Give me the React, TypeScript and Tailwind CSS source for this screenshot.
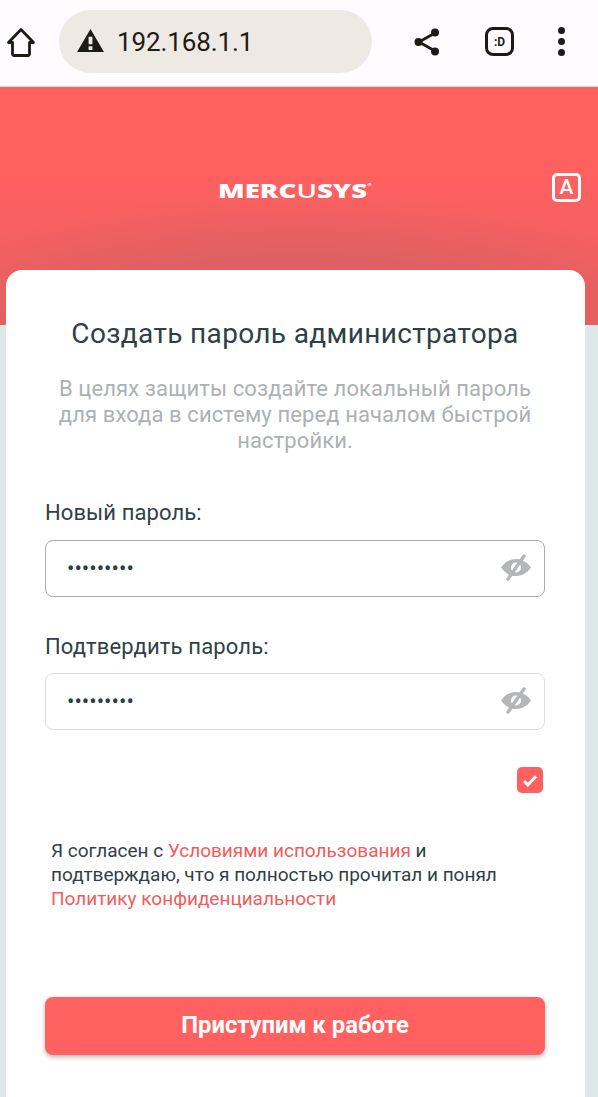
import { useState } from "react";

const EyeOff = () => (
  <svg className="mb-[3px]" width="32" height="28" viewBox="0 0 32 28" fill="none">
    <path
      d="M1 14.500C5 9 10 6 16 6s11 3 15 8.500c-4 5.500-9 8.500-15 8.500s-11-3-15-8.500Z"
      fill="#b4b6b7"
    />
    <circle cx="16" cy="14.500" r="5" fill="#fff" />
    <path d="M8 26 24 3" stroke="#b4b6b7" strokeWidth="3.400" strokeLinecap="round" />
  </svg>
);

const PasswordField = ({ active }: { active?: boolean }) => (
  <div
    className={`flex h-[57px] items-center justify-between rounded-lg border bg-white pl-[21px] pr-[12px] ${
      active ? "border-[#a9adaf]" : "border-[#dcdfe0]"
    }`}
  >
    <span className="text-[22px] leading-none text-[#2f3d44]">•••••••••</span>
    <EyeOff />
  </div>
);

export default function App() {
  const [agreed, setAgreed] = useState(true);

  return (
    <div className="h-[1097px] overflow-hidden bg-[#dde8e9] font-['Roboto',sans-serif]">
      {/* browser bar */}
      <div className="flex h-[87px] items-center border-b border-[#ecdccb] bg-[#fffbff] pb-[3px]">
        <svg className="ml-[6px] shrink-0" width="30" height="32" viewBox="0 0 30 32" fill="none">
          <path
            d="M15 3.500 2.500 16.500h4v11.500a1.500 1.500 0 0 0 1.500 1.500h14a1.500 1.500 0 0 0 1.500-1.500V16.500h4L15 3.500Z"
            stroke="#1d1b16"
            strokeWidth="2.800"
            strokeLinejoin="round"
          />
        </svg>
        <div className="ml-[23px] flex h-[63px] w-[313px] items-center rounded-full bg-[#eee9e2] pl-[17px]">
          <svg className="mb-[2px]" width="29" height="25" viewBox="0 0 30 26">
            <path fillRule="evenodd" d="M15 1 29 25H1L15 1Zm-2 8v8h4V9h-4Zm0 10v4h4v-4h-4Z" fill="#1d1b16" />
          </svg>
          <span className="ml-[12px] text-[26px] leading-none tracking-[-0.1px] text-[#1d1b16]">192.168.1.1</span>
        </div>
        <svg className="ml-[40px] shrink-0" width="30" height="32" viewBox="0 0 30 32">
          <path d="M23 7 7 16l16 9" stroke="#1d1b16" strokeWidth="2.800" fill="none" />
          <circle cx="23" cy="6.500" r="4" fill="#1d1b16" />
          <circle cx="6.500" cy="16" r="4" fill="#1d1b16" />
          <circle cx="23" cy="25.500" r="4" fill="#1d1b16" />
        </svg>
        <div className="ml-[43px] flex h-[29px] w-[29px] shrink-0 items-center justify-center rounded-[8px] border-[3px] border-[#1d1b16] text-[12px] font-bold leading-none text-[#1d1b16]">
          :D
        </div>
        <div className="ml-[44px] flex shrink-0 flex-col gap-[4px]">
          <span className="h-[7px] w-[7px] rounded-full bg-[#1d1b16]" />
          <span className="h-[7px] w-[7px] rounded-full bg-[#1d1b16]" />
          <span className="h-[7px] w-[7px] rounded-full bg-[#1d1b16]" />
        </div>
      </div>

      {/* red header */}
      <div className="relative h-[238px] bg-[radial-gradient(ellipse_420px_130px_at_50%_100%,#d75f61_0%,#e06062_55%,transparent_100%),linear-gradient(#ff6060_35%,#ee5f61_100%)]">
        <div className="flex items-start justify-between pl-[218px] pr-[17px] pt-[86px]">
          <div className="flex origin-top-left scale-x-[1.38] items-start pt-[7px] text-[20px] font-extrabold leading-[22px] text-white [font-family:'Open_Sans',sans-serif]">
            MERC<span className="font-semibold">U</span>SYS
            <span className="mt-[3px] text-[4px] leading-none">®</span>
          </div>
          <div className="flex h-[29px] w-[29px] items-center justify-center rounded-[5px] border-[3px] border-white text-[21px] font-medium leading-none text-white">
            A
          </div>
        </div>
      </div>

      {/* card */}
      <div className="relative ml-[6px] mr-[13px] -mt-[55px] h-[830px] rounded-t-[16px] bg-white pl-[39px] pr-[40px] pt-[47px]">
        <h1 className="text-center text-[28px] font-normal leading-[34px] tracking-[0.35px] text-[#2f3f46]">
          Создать пароль администратора
        </h1>
        <p className="mt-[25px] text-center text-[22px] leading-[26px] tracking-[0.1px] text-[#adb1b3]">
          В целях защиты создайте локальный пароль для входа в систему перед началом быстрой настройки.
        </p>

        <label className="mt-[46px] block text-[22px] leading-[26px] tracking-[0.1px] text-[#2f3f46]">Новый пароль:</label>
        <div className="mt-[14px]">
          <PasswordField active />
        </div>

        <label className="mt-[37px] block text-[22px] leading-[26px] tracking-[0.15px] text-[#2f3f46]">Подтвердить пароль:</label>
        <div className="mt-[13px]">
          <PasswordField />
        </div>

        <div className="mt-[37px] flex justify-end pr-[2px]">
          <button
            onClick={() => setAgreed(!agreed)}
            className="flex h-[26px] w-[26px] items-center justify-center rounded-[5px] bg-[#ff6060]"
          >
            {agreed && (
              <svg width="16" height="13" viewBox="0 0 14 12" fill="none">
                <path d="M1.500 6.500 5 10l7.500-8" stroke="#fff" strokeWidth="2.800" />
              </svg>
            )}
          </button>
        </div>

        <p className="mt-[46px] pl-[6px] text-[19px] leading-[24px] text-[#2f3f46]">
          Я согласен с <span className="text-[#f25c5c]">Условиями использования</span> и подтверждаю, что я полностью прочитал и понял{" "}
          <span className="text-[#f25c5c]">Политику конфиденциальности</span>
        </p>

        <button className="mt-[86px] flex h-[58px] w-full items-center justify-center rounded-lg bg-[#ff6060] text-[23.800px] font-bold leading-none text-white shadow-[0_2px_5px_rgba(0,0,0,0.3)]">
          Приступим к работе
        </button>
      </div>
    </div>
  );
}
